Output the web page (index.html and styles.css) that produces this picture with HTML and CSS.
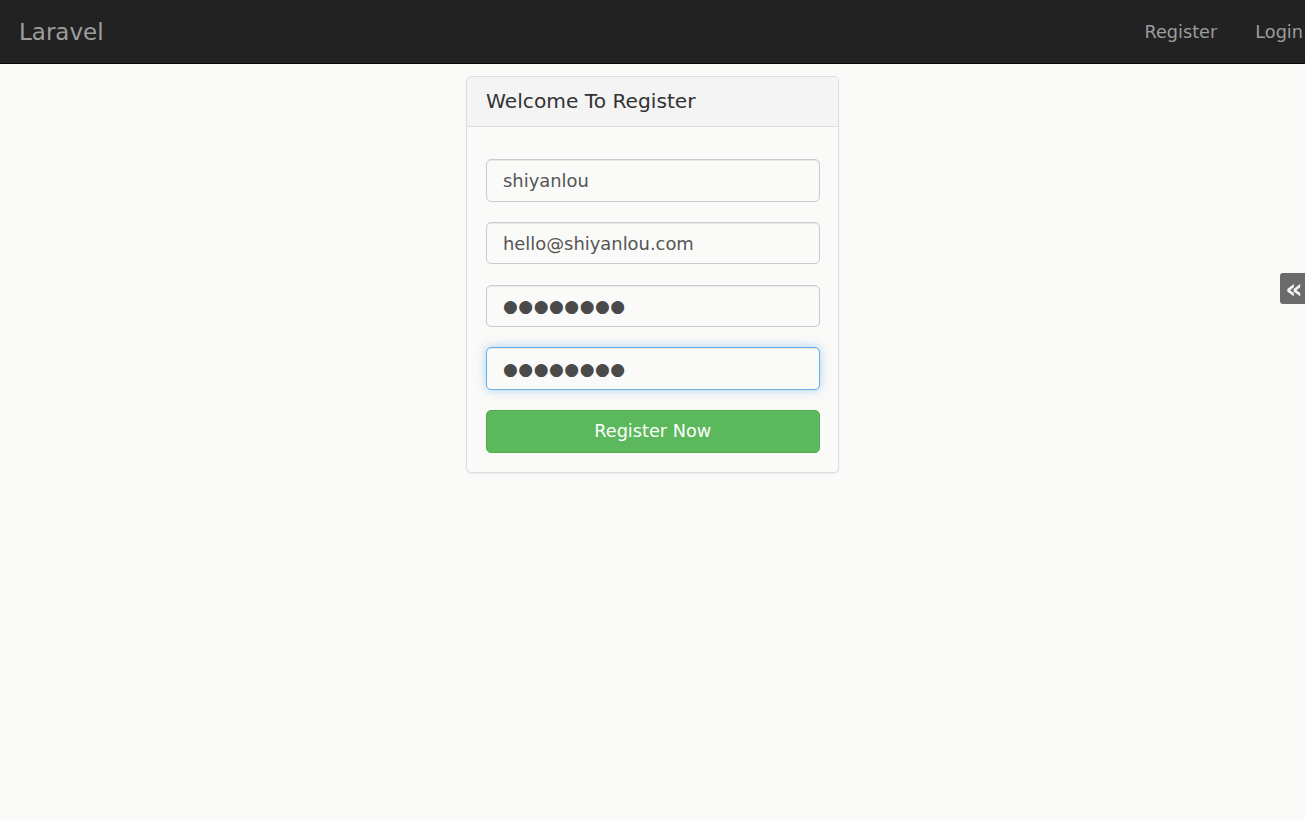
FILE: index.html
```html
<!DOCTYPE html>
<html lang="en">
<head>
<meta charset="utf-8">
<title>Laravel</title>
<link rel="stylesheet" href="styles.css">
</head>
<body>
<nav class="navbar">
  <a class="brand" href="#">Laravel</a>
  <ul class="nav-links">
    <li><a href="#">Register</a></li>
    <li><a href="#">Login</a></li>
  </ul>
</nav>
<main class="container">
  <div class="panel">
    <div class="panel-heading">Welcome To Register</div>
    <form class="panel-body">
      <input class="form-control" type="text" value="shiyanlou">
      <input class="form-control" type="text" value="hello@shiyanlou.com">
      <input class="form-control dots" type="text" value="●●●●●●●●">
      <input class="form-control dots focus" type="text" value="●●●●●●●●">
      <button class="btn" type="button">Register Now</button>
    </form>
  </div>
</main>
<a class="side-tab" href="#">«</a>
</body>
</html>
```
FILE: styles.css
```css
html, body {
  margin: 0;
  padding: 0;
  overflow-x: hidden;
}
body {
  background: #fafaf8;
  font-family: "DejaVu Sans", "Liberation Sans", sans-serif;
  font-size: 17.5px;
  color: #333;
  min-height: 820px;
}
.navbar {
  display: flex;
  align-items: center;
  height: 63px;
  background: #222;
  border-bottom: 1px solid #080808;
}
.brand {
  color: #9d9d9d;
  font-size: 23px;
  text-decoration: none;
  padding: 0 19px;
}
.nav-links {
  list-style: none;
  display: flex;
  margin: 0 -17px 0 auto;
  padding: 0;
}
.nav-links a {
  display: block;
  color: #9d9d9d;
  text-decoration: none;
  padding: 0 19px;
  font-size: 17.7px;
}
.container {
  display: flex;
  justify-content: center;
  padding-top: 12px;
}
.panel {
  width: 371px;
  background: #fafaf8;
  border: 1px solid #ddd;
  border-radius: 5px;
  box-shadow: 0 1px 2px rgba(0,0,0,.06);
}
.panel-heading {
  background: #f4f4f4;
  border-bottom: 1px solid #ddd;
  border-radius: 4px 4px 0 0;
  padding: 12px 19px 13px;
  font-size: 20.2px;
  line-height: 24px;
  color: #333;
}
.panel-body {
  display: flex;
  flex-direction: column;
  gap: 20.3px;
  padding: 32px 18.5px 19px 19px;
}
.form-control {
  box-sizing: border-box;
  height: 42.5px;
  width: 100%;
  margin: 0;
  padding: 6px 16px;
  font-family: "DejaVu Sans", sans-serif;
  font-size: 17.9px;
  color: #555;
  background: #fafaf8;
  border: 1px solid #ccc;
  border-radius: 5px;
  box-shadow: inset 0 1px 1px rgba(0,0,0,.075);
  outline: none;
}
.dots {
  color: #4a4a4a;
  font-size: 17px;
  letter-spacing: 0.5px;
}
.focus {
  border-color: #66afe9;
  box-shadow: inset 0 1px 1px rgba(0,0,0,.075), 0 0 10px rgba(102,175,233,.55);
}
.btn {
  box-sizing: border-box;
  height: 42.5px;
  width: 100%;
  margin: 0;
  font-family: "DejaVu Sans", sans-serif;
  font-size: 17.7px;
  color: #fff;
  background: #5cb85c;
  border: 1px solid #4cae4c;
  border-radius: 5px;
}
.side-tab {
  position: fixed;
  right: 0;
  top: 273px;
  width: 25px;
  height: 31px;
  display: flex;
  align-items: center;
  justify-content: center;
  padding-left: 3px;
  box-sizing: border-box;
  background: #6b6b6b;
  color: #f4f4f4;
  border-radius: 3px 0 0 3px;
  font-size: 27px;
  font-weight: bold;
  text-decoration: none;
  line-height: 1;
}
```
